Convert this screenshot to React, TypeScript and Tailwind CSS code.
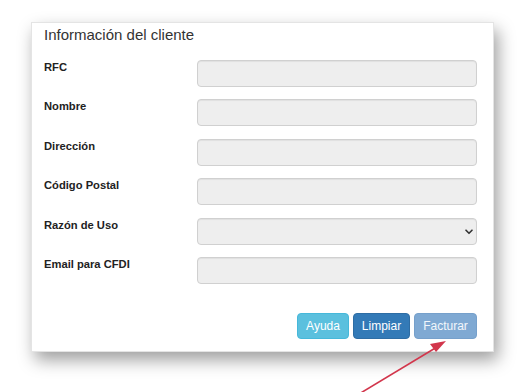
import React from "react";

const fields = [
  { label: "RFC", type: "input" },
  { label: "Nombre", type: "input" },
  { label: "Dirección", type: "input" },
  { label: "Código Postal", type: "input" },
  { label: "Razón de Uso", type: "select" },
  { label: "Email para CFDI", type: "input" },
];

export default function App() {
  return (
    <div className="relative w-[521px] h-[392px] bg-white overflow-hidden font-['Liberation_Sans',Arial,sans-serif] text-[#333]">
      <div className="ml-[31px] mt-[22px] w-[463px] h-[330px] bg-white pl-[12px] pr-[16px] pt-[3px] shadow-[4px_8px_16px_rgba(0,0,0,0.38)] border border-[#e4e4e4] flex flex-col">
        {/* Header */}
        <h3 className="text-[15px] leading-[17px] font-normal">Información del cliente</h3>

        {/* Form rows */}
        <div className="mt-[17px] flex flex-col gap-y-[12.4px]">
          {fields.map((f) => (
            <div key={f.label} className="flex items-start">
              <label className="w-[153px] shrink-0 pt-[1px] text-[11.2px] leading-[13px] font-bold text-[#222]">
                {f.label}
              </label>
              <div className="relative flex-1 h-[27px] rounded-[4px] border border-[#d0d0d0] bg-[#eeeeee] shadow-[inset_0_1px_1px_rgba(0,0,0,0.06)]">
                {f.type === "select" && (
                  <svg
                    className="absolute right-[3px] top-[10px]"
                    width="8"
                    height="6"
                    viewBox="0 0 8 6"
                    fill="none"
                  >
                    <path d="M1 1.2 L4 4.3 L7 1.2" stroke="#333" strokeWidth="1.6" strokeLinecap="round" strokeLinejoin="round" />
                  </svg>
                )}
              </div>
            </div>
          ))}
        </div>

        {/* Buttons */}
        <div className="mt-[29px] flex justify-end gap-[4px] text-[12px]">
          <button type="button" className="h-[26px] w-[52px] rounded-[4px] bg-[#5bc0de] border border-[#46b8da] text-white">
            Ayuda
          </button>
          <button type="button" className="h-[26px] w-[57px] rounded-[4px] bg-[#337ab7] border border-[#2e6da4] text-white">
            Limpiar
          </button>
          <button type="button" className="h-[26px] w-[63px] rounded-[4px] bg-[#7fa9d3] border border-[#76a0cb] text-white/90">
            Facturar
          </button>
        </div>
      </div>

      {/* Annotation arrow */}
      <svg className="absolute left-0 top-0 pointer-events-none" width="521" height="392" viewBox="0 0 521 392">
        <line x1="359" y1="394" x2="437" y2="347" stroke="#d2364c" strokeWidth="1.6" />
        <polygon points="446,341 430,344 436,352" fill="#d2364c" />
      </svg>
    </div>
  );
}
